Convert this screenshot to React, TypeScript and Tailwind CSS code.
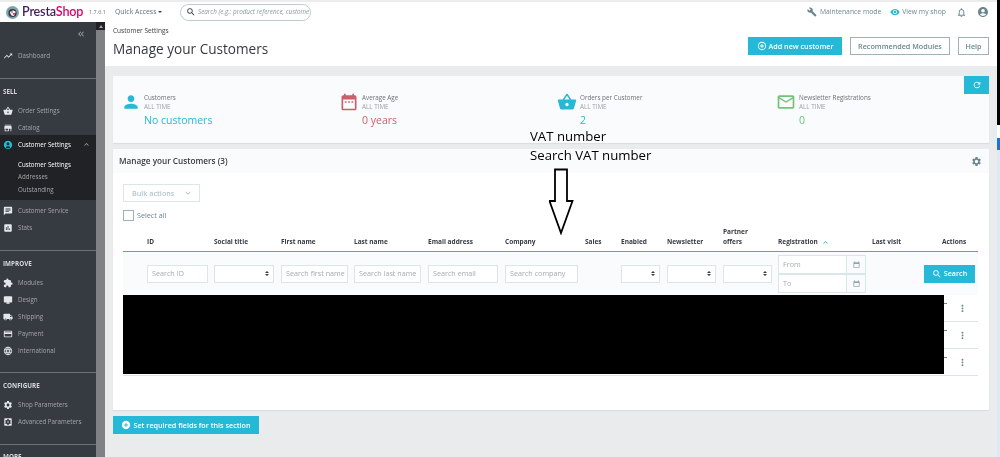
import React from "react";
import {
  MdTrendingUp, MdShoppingBasket, MdStore, MdAccountCircle, MdChat, MdAssessment, MdExtension, MdDesktopMac,
  MdLocalShipping, MdPayment, MdLanguage, MdSettings, MdSettingsApplications, MdPerson, MdDateRange, MdMailOutline,
  MdBuild, MdVisibility, MdNotificationsNone, MdAddCircleOutline, MdAddCircle, MdRefresh, MdSearch, MdMoreVert,
  MdKeyboardDoubleArrowLeft, MdKeyboardArrowUp, MdKeyboardArrowDown, MdOutlineCalendarToday,
} from "react-icons/md";

const font = "font-['Open_Sans','Liberation_Sans',sans-serif]";

function NavItem({ icon, label, active }: { icon: React.ReactNode; label: string; active?: boolean }) {
  return (
    <div className={"flex h-[17px] items-center whitespace-nowrap pl-[3px] text-[6.2px] " + (active ? "text-white" : "text-[#a3a6ab]")}>
      <span className={"flex w-[15px] text-[10px] " + (active ? "text-[#25b9d7]" : "text-[#e4e6e9]")}>{icon}</span>
      {label}
    </div>
  );
}

function Section({ title, spacing = "mt-[14px] pt-[8px]" }: { title: string; spacing?: string }) {
  return (
    <div className={"border-t border-[#6d7076] pl-[3px] text-[6.3px] leading-[10px] font-bold text-[#d5d7da] " + spacing}>
      {title}
    </div>
  );
}

function Sidebar() {
  return (
    <aside className="flex w-[105px] shrink-0 bg-[#363a41]">
      <div className="w-[96px] overflow-hidden">
        <div className="flex h-[22px] items-center justify-end pr-[10px] pt-[2px] text-[#a3a6ab]">
          <MdKeyboardDoubleArrowLeft className="text-[10px]" />
        </div>
        <div className="mt-[3px]">
          <NavItem icon={<MdTrendingUp />} label="Dashboard" />
        </div>
        <Section title="SELL" />
        <div className="mt-[5px]">
          <NavItem icon={<MdShoppingBasket />} label="Order Settings" />
          <NavItem icon={<MdStore />} label="Catalog" />
        </div>
        <div className="-mt-[1px] bg-[#202226] pt-[1px] pb-[4px]">
          <div className="flex h-[17px] items-center pr-[5px]">
            <div className="flex-1">
              <NavItem icon={<MdAccountCircle />} label="Customer Settings" active />
            </div>
            <MdKeyboardArrowUp className="text-[9px] text-[#a3a6ab]" />
          </div>
          <div className="mt-[6px] flex h-[12px] items-center pl-[18px] text-[6.2px] text-white">Customer Settings</div>
          <div className="flex h-[12px] items-center pl-[18px] text-[6.2px] text-[#a3a6ab]">Addresses</div>
          <div className="mt-[1px] flex h-[12px] items-center pl-[18px] text-[6.2px] text-[#a3a6ab]">Outstanding</div>
        </div>
        <div className="mt-[2px]">
          <NavItem icon={<MdChat />} label="Customer Service" />
          <NavItem icon={<MdAssessment />} label="Stats" />
        </div>
        <Section title="IMPROVE" />
        <div className="mt-[5px]">
          <NavItem icon={<MdExtension />} label="Modules" />
          <NavItem icon={<MdDesktopMac />} label="Design" />
          <NavItem icon={<MdLocalShipping />} label="Shipping" />
          <NavItem icon={<MdPayment />} label="Payment" />
          <NavItem icon={<MdLanguage />} label="International" />
        </div>
        <Section title="CONFIGURE" spacing="mt-[13px] pt-[8px]" />
        <div className="mt-[5px]">
          <NavItem icon={<MdSettings />} label="Shop Parameters" />
          <NavItem icon={<MdSettingsApplications />} label="Advanced Parameters" />
        </div>
        <Section title="MORE" spacing="mt-[14px] pt-[7px]" />
      </div>
      <div className="w-[9px] bg-[#808184]">
        <div className="flex h-[8px] items-center justify-center bg-[#202226]">
          <span className="h-0 w-0 border-x-[2px] border-b-[3px] border-x-transparent border-b-[#a3a6ab]" />
        </div>
      </div>
    </aside>
  );
}

function Header() {
  return (
    <header className="flex h-[20px] items-center bg-white text-[#6c868e]">
      <svg viewBox="0 0 24 24" className="ml-[6px] h-[13px] w-[13px] shrink-0">
        <circle cx="12" cy="12" r="12" fill="#7fa5ac" />
        <circle cx="12" cy="13" r="7.5" fill="#34343c" />
        <path d="M7 12 C9 7 16 7 18 11 L15 18 C12 19 9 18 7 12Z" fill="#f2efe9" />
        <circle cx="11" cy="11" r="1.3" fill="#34343c" />
        <path d="M13 13 L18 14 L14 17Z" fill="#df0067" />
      </svg>
      <span className="ml-[3px] w-[62px] shrink-0 text-[12.6px] leading-none font-semibold tracking-[-0.2px] font-['Lato',sans-serif]">
        <span className="text-[#3f1d5e]">Presta</span>
        <span className="text-[#df0067]">Shop</span>
      </span>
      <span className="ml-[5px] w-[16px] shrink-0 text-[5.5px] text-[#6d7076]">1.7.6.1</span>
      <span className="ml-[10px] flex w-[43px] shrink-0 items-center whitespace-nowrap text-[6.9px] text-[#5b6f76]">
        Quick Access
        <span className="ml-[2px] h-0 w-0 border-x-[2px] border-t-[2px] border-x-transparent border-t-[#363a41]" />
      </span>
      <div className="ml-[22px] flex h-[17px] w-[131px] items-center overflow-hidden rounded-full border border-[#bbcdd2] pl-[5px]">
        <MdSearch className="shrink-0 text-[10px] text-[#363a41]" />
        <span className="ml-[2px] whitespace-nowrap text-[6.3px] text-[#8a979b] italic">
          Search (e.g.: product reference, custome
        </span>
      </div>
      <div className="flex-1" />
      <MdBuild className="text-[10px] text-[#6c868e]" />
      <span className="ml-[3px] text-[6.8px]">Maintenance mode</span>
      <MdVisibility className="ml-[9px] text-[10px] text-[#25b9d7]" />
      <span className="ml-[2px] text-[6.8px]">View my shop</span>
      <MdNotificationsNone className="ml-[10px] text-[11px]" />
      <MdAccountCircle className="ml-[10px] mr-[8px] text-[12px]" />
    </header>
  );
}

function PageHead() {
  return (
    <div className="flex h-[44px] bg-white pl-[8px] pr-[8px]">
      <div className="flex-1 text-[#363a41]">
        <div className="pt-[4px] text-[6.5px] leading-[10px]">Customer Settings</div>
        <h1 className="mt-[2px] text-[13.6px] leading-[22px]">Manage your Customers</h1>
      </div>
      <div className="flex items-start gap-[8px] pt-[15px] text-[7.2px] font-semibold">
        <button className="flex h-[18px] w-[94px] items-center justify-center bg-[#25b9d7] text-white">
          <MdAddCircleOutline className="mr-[2px] text-[10px]" />
          Add new customer
        </button>
        <button className="h-[18px] w-[100px] border border-[#9fb1b6] text-[#6c868e]">Recommended Modules</button>
        <button className="h-[18px] w-[31px] border border-[#9fb1b6] text-[#6c868e]">Help</button>
      </div>
    </div>
  );
}

function Stat({ icon, title, value, color }: { icon: React.ReactNode; title: string; value: string; color: string }) {
  return (
    <div className="flex">
      <div className={"-ml-[3px] w-[23px] shrink-0 pt-[16px] text-[20px] " + color}>{icon}</div>
      <div className="pt-[17px]">
        <div className="text-[6.3px] leading-[9px] text-[#6d7076]">{title}</div>
        <div className="text-[6.3px] leading-[9px] text-[#9aa3a8]">ALL TIME</div>
        <div className={"mt-[1px] text-[10.5px] leading-[17px] " + color}>{value}</div>
      </div>
    </div>
  );
}

function Arrows() {
  return (
    <span className="flex flex-col gap-[1px]">
      <span className="h-0 w-0 border-x-[2px] border-b-[2px] border-x-transparent border-b-[#363a41]" />
      <span className="h-0 w-0 border-x-[2px] border-t-[2px] border-x-transparent border-t-[#363a41]" />
    </span>
  );
}

const inputCls =
  "flex h-[18px] items-center overflow-hidden whitespace-nowrap border border-[#dbe6e9] bg-white px-[4px] text-[7.2px] text-[#a3acb0]";

function Select({ w }: { w: string }) {
  return (
    <div className={inputCls + " justify-end " + w}>
      <Arrows />
    </div>
  );
}

function SearchInput({ w, label }: { w: string; label: string }) {
  return <div className={inputCls + " " + w}>{label}</div>;
}

function DateInput({ label }: { label: string }) {
  return (
    <div className="flex h-[19px] w-[88px] items-center border border-[#dbe6e9] bg-white text-[7.2px] text-[#a3acb0]">
      <span className="flex-1 pl-[4px]">{label}</span>
      <span className="flex h-full w-[19px] items-center justify-center border-l border-[#dbe6e9] bg-[#fafbfc] text-[#6c868e]">
        <MdOutlineCalendarToday className="text-[7px]" />
      </span>
    </div>
  );
}

const gridCols =
  "grid grid-cols-[24px_67px_67px_73px_74px_77px_80px_36px_46px_56px_55px_94px_70px_36px]";

function Table() {
  const heads = ["ID", "Social title", "First name", "Last name", "Email address", "Company", "Sales", "Enabled", "Newsletter"];
  return (
    <div className="ml-[10px] mr-[11px] mt-[5px]">
      <div className={gridCols + " h-[27px] items-end border-b-[1.5px] border-[#25b9d7] pb-[4px] text-[6.5px] leading-[10px] font-bold text-[#363a41]"}>
        <span />
        {heads.map((h) => (
          <span key={h}>{h}</span>
        ))}
        <span>
          Partner
          <br />
          offers
        </span>
        <span className="flex items-center">
          Registration
          <MdKeyboardArrowUp className="ml-[3px] text-[9px] text-[#25b9d7]" />
        </span>
        <span>Last visit</span>
        <span>Actions</span>
      </div>
      <div className={gridCols + " h-[43px] items-center bg-[#fafbfc]"}>
        <span />
        <SearchInput w="w-[61px]" label="Search ID" />
        <Select w="w-[60px]" />
        <SearchInput w="w-[67px]" label="Search first name" />
        <SearchInput w="w-[67px]" label="Search last name" />
        <SearchInput w="w-[70px]" label="Search email" />
        <SearchInput w="w-[73px]" label="Search company" />
        <span />
        <Select w="w-[39px]" />
        <Select w="w-[49px]" />
        <Select w="w-[49px]" />
        <div className="flex flex-col">
          <DateInput label="From" />
          <DateInput label="To" />
        </div>
        <span />
        <div className="relative">
          <button className="absolute top-[-9px] left-[-18px] flex h-[18px] w-[51px] items-center justify-center bg-[#25b9d7] text-[7.2px] font-semibold text-white">
            <MdSearch className="mr-[2px] text-[10px]" />
            Search
          </button>
        </div>
      </div>
      {[0, 1, 2].map((i) => (
        <div key={i} className="flex h-[27px] items-center justify-end border-b border-[#dbe6e9] pr-[10px]">
          <span className="mb-[9px] mr-[10px] h-[1px] w-[3px] bg-[#6c868e]" />
          <MdMoreVert className="text-[11px] text-[#6c868e]" />
        </div>
      ))}
      <div className="absolute top-[295px] left-[123px] h-[79px] w-[821px] bg-black" />
    </div>
  );
}

function Annotation() {
  return (
    <>
      <div className="absolute top-[127px] left-[530px] font-['Open_Sans',sans-serif] text-[13.2px] leading-[19px] text-black">
        <div>VAT number</div>
        <div>Search VAT number</div>
      </div>
      <svg viewBox="0 0 26 67" className="absolute top-[168px] left-[549px] h-[67px] w-[26px]">
        <path d="M6 1.5 H18 V33 H23.5 L12 65 L0.5 33 H6 Z" fill="#fff" stroke="#000" strokeWidth="1.8" />
      </svg>
    </>
  );
}

export default function App() {
  return (
    <div className={"relative flex h-[457px] w-[1000px] flex-col overflow-hidden bg-[#dfe8f6] pr-[3px] blur-[0.35px] " + font}>
      <div className="h-[2px] bg-[#ececec]" />
      <Header />
      <div className="flex min-h-0 flex-1">
        <Sidebar />
        <main className="min-w-0 flex-1 bg-[#eaebec]">
          <PageHead />
          <div className="px-[8px] pt-[10px]">
            <section className="relative grid h-[67px] grid-cols-[218px_218px_219px_1fr] bg-[#fafbfc] pl-[11px] shadow-[0_1px_1px_rgba(0,0,0,0.06)]">
              <Stat icon={<MdPerson />} title="Customers" value="No customers" color="text-[#25b9d7]" />
              <Stat icon={<MdDateRange />} title="Average Age" value="0 years" color="text-[#c8616c]" />
              <Stat icon={<MdShoppingBasket />} title="Orders per Customer" value="2" color="text-[#25b9d7]" />
              <Stat icon={<MdMailOutline />} title="Newsletter Registrations" value="0" color="text-[#72c279]" />
              <button className="absolute top-0 right-0 flex h-[18px] w-[25px] items-center justify-center bg-[#25b9d7] text-white">
                <MdRefresh className="text-[10px]" />
              </button>
            </section>
            <section className="mt-[6px] h-[261px] bg-white shadow-[0_1px_1px_rgba(0,0,0,0.06)]">
              <div className="flex h-[24px] items-center justify-between bg-[#fafbfc] pl-[6px] pr-[7px] text-[8.2px] font-semibold text-[#363a41]">
                Manage your Customers (3)
                <MdSettings className="text-[11px] text-[#6c868e]" />
              </div>
              <div className="pl-[10px] pt-[11px]">
                <div className="flex h-[18px] w-[77px] items-center justify-between border border-[#dbe6e9] pl-[8px] pr-[6px] text-[7.2px] font-semibold text-[#b3c7cd]">
                  Bulk actions
                  <MdKeyboardArrowDown className="text-[10px]" />
                </div>
                <div className="mt-[8px] flex h-[10px] items-center text-[7.2px] text-[#6c868e]">
                  <span className="mr-[3px] h-[11px] w-[11px] border border-[#9fb1b6] bg-white" />
                  Select all
                </div>
              </div>
              <Table />
            </section>
            <button className="mt-[6px] flex h-[18px] w-[146px] items-center justify-center bg-[#25b9d7] text-[7.2px] font-semibold text-white">
              <MdAddCircle className="mr-[2px] text-[10px]" />
              Set required fields for this section
            </button>
          </div>
        </main>
      </div>
      <Annotation />
      <div className="absolute top-0 right-0 h-[125px] w-[3px] bg-black" />
      <div className="absolute top-[125px] right-0 h-[13px] w-[3px] bg-white" />
      <div className="absolute top-[138px] right-0 h-[12px] w-[3px] bg-[#1a73d9]" />
    </div>
  );
}
